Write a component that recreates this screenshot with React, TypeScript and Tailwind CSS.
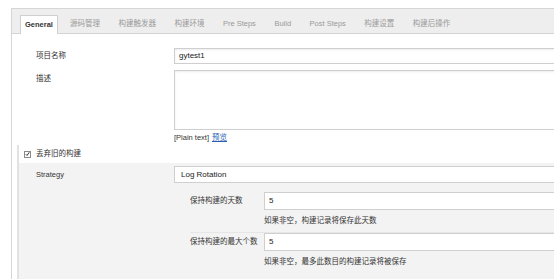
import React from "react";

const tabs = ["源码管理", "构建触发器", "构建环境", "Pre Steps", "Build", "Post Steps", "构建设置", "构建后操作"];

const App = () => {
  return (
    <div className="w-[554px] h-[279px] overflow-hidden bg-white pt-[8px] pl-[11px] font-['Liberation_Sans','Noto_Sans_CJK_SC',sans-serif] text-[7.5px] text-[#333]">
      <div className="w-[600px] h-[300px] border-l border-t border-[#d6d6d6]">
        {/* Tabs */}
        <div className="h-[25px] bg-[#eeeeee] border-b border-[#d4d4d4] flex items-end pl-[8px]">
          <div className="h-[19px] -mb-px bg-white border border-b-0 border-[#d0d0d0] px-[4px] flex items-center font-bold text-[#333] mr-[8px]">
            General
          </div>
          {tabs.map((t) => (
            <div key={t} className="h-[19px] flex items-center px-[4px] mr-[10.5px] text-[#9a9a9a]">
              {t}
            </div>
          ))}
        </div>

        {/* Form */}
        <div className="bg-white pt-[14px]">
          <div className="flex items-center pl-[24px]">
            <div className="w-[138px]">项目名称</div>
            <div className="flex-1 h-[16px] border border-[#cfcfcf] shadow-[inset_0_1px_2px_rgba(0,0,0,0.08)] flex items-center pl-[4px] text-[8px] text-[#222]">
              gytest1
            </div>
          </div>

          <div className="flex items-start pl-[24px] mt-[6px]">
            <div className="w-[138px] pt-[3px]">描述</div>
            <div className="flex-1 h-[60px] border border-[#cfcfcf] shadow-[inset_0_1px_2px_rgba(0,0,0,0.08)] bg-white" />
          </div>

          <div className="pl-[162px] mt-[3px] h-[10px] flex items-center gap-[3px]">
            <span>[Plain text]</span>
            <span className="text-[#2b5fb4] underline">预览</span>
          </div>

          {/* Discard old builds */}
          <div className="ml-[5px] mt-[2px] border-l-2 border-[#e2e2e2] bg-[#f3f3f3] h-[140px]">
            <div className="h-[18px] flex items-center pl-[5px] bg-white">
              <span className="w-[7px] h-[7px] border border-[#8a8a8a] bg-white flex items-center justify-center">
                <svg width="6" height="6" viewBox="0 0 10 10">
                  <path d="M1.5 5.5 L4 8 L8.5 1.5" fill="none" stroke="#333" strokeWidth="2" />
                </svg>
              </span>
              <span className="ml-[5px]">丢弃旧的构建</span>
            </div>

            <div className="flex items-center pl-[17px] mt-[3px]">
              <div className="w-[138px]">Strategy</div>
              <div className="flex-1 h-[17px] border border-[#cfcfcf] bg-white flex items-center pl-[6px] text-[8px] text-[#222]">
                Log Rotation
              </div>
            </div>

            <div className="pl-[171px] mt-[9px]">
              <div className="flex items-center">
                <div className="w-[74px]">保持构建的天数</div>
                <div className="flex-1 h-[18px] border border-[#cfcfcf] bg-white flex items-center pl-[4px] text-[8px] text-[#222]">
                  5
                </div>
              </div>
              <div className="pl-[74px] h-[23px] flex items-center border-b border-[#e6e6e6]">
                如果非空，构建记录将保存此天数
              </div>
              <div className="flex items-center">
                <div className="w-[74px]">保持构建的最大个数</div>
                <div className="flex-1 h-[18px] border border-[#cfcfcf] bg-white flex items-center pl-[4px] text-[8px] text-[#222]">
                  5
                </div>
              </div>
              <div className="pl-[74px] h-[22px] flex items-center">
                如果非空，最多此数目的构建记录将被保存
              </div>
            </div>
          </div>
        </div>
      </div>
    </div>
  );
};

export default App;
